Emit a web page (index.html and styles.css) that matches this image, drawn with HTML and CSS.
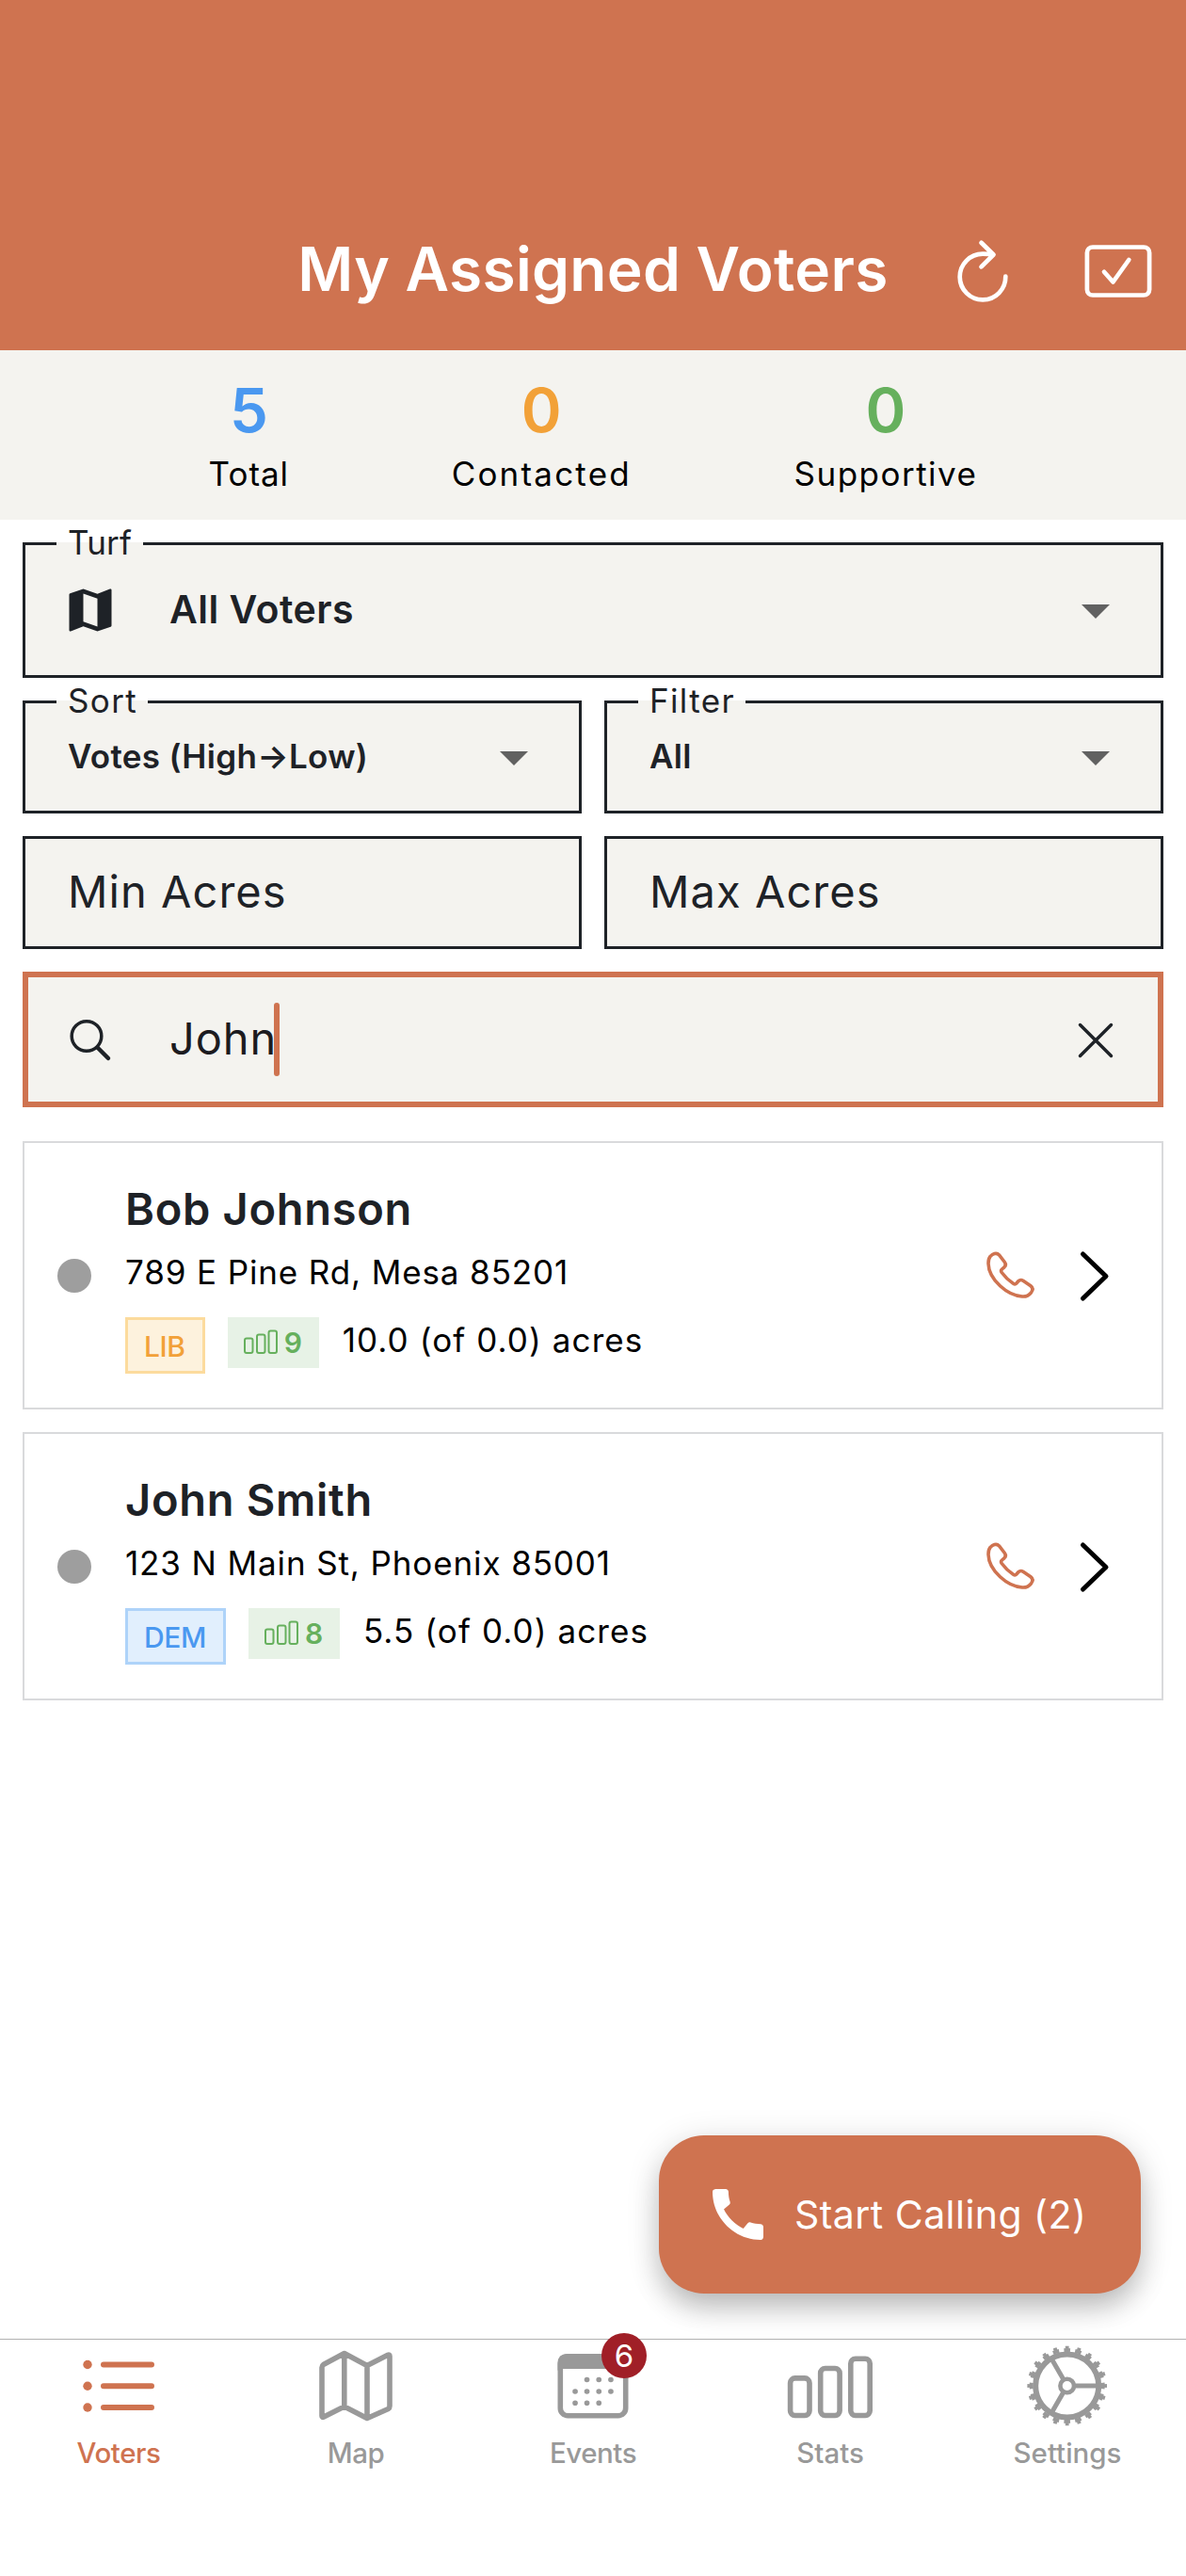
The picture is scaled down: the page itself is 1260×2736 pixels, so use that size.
FILE: index.html
```
<!DOCTYPE html>
<html lang="en">
<head>
<meta charset="utf-8">
<title>My Assigned Voters</title>
<link rel="stylesheet" href="styles.css">
</head>
<body>
<div class="app">
  <header class="header">
    <div class="bar">
      <h1 class="title">My Assigned Voters</h1>
      <div class="actions">
        <svg class="action" viewBox="0 0 72 72"><path d="M47.500 20.500C44 19.600 40 19.600 36 19.600A24.300 24.400 0 1 0 60.300 43.600M34.500 7.800L47.500 20.500L34.500 33.300" /></svg>
        <svg class="action" viewBox="0 0 72 72"><rect x="2.900" y="12.500" width="66.200" height="51" rx="6"/><path d="M21 38.700L30.500 49.500L47.300 26"/></svg>
      </div>
    </div>
  </header>

  <section class="stats">
    <div class="stat"><span class="num blue">5</span><span class="cap cap-total">Total</span></div>
    <div class="stat"><span class="num orange">0</span><span class="cap cap-contacted">Contacted</span></div>
    <div class="stat"><span class="num green">0</span><span class="cap cap-supportive">Supportive</span></div>
  </section>

  <main class="main">
    <form class="filters">
      <div class="field tall">
        <span class="label label-turf">Turf</span>
        <svg class="icon" viewBox="0 0 24 24"><path d="M20.500 3l-.16.03L15 5.100 9 3 3.360 4.900c-.21.070-.36.250-.36.480V20.500c0 .280.220.500.500.500l.16-.03L9 18.900l6 2.100 5.640-1.900c.21-.07.360-.25.360-.48V3.500c0-.28-.22-.5-.5-.5zM15 19l-6-2.110V5l6 2.110V19z"/></svg>
        <span class="value value-lg">All Voters</span>
        <svg class="arrow" viewBox="0 0 60 60"><path d="M15 24h30L30 39z"/></svg>
      </div>
      <div class="row">
        <div class="field">
          <span class="label">Sort</span>
          <span class="value">Votes (High→Low)</span>
          <svg class="arrow" viewBox="0 0 60 60"><path d="M15 24h30L30 39z"/></svg>
        </div>
        <div class="field">
          <span class="label">Filter</span>
          <span class="value">All</span>
          <svg class="arrow" viewBox="0 0 60 60"><path d="M15 24h30L30 39z"/></svg>
        </div>
      </div>
      <div class="row">
        <div class="field"><span class="placeholder">Min Acres</span></div>
        <div class="field"><span class="placeholder">Max Acres</span></div>
      </div>
      <div class="field tall focused">
        <svg class="icon line" viewBox="0 0 60 60"><circle cx="26" cy="26.500" r="15.800"/><path d="M37.500 38.500L49 50" stroke-width="4.500"/></svg>
        <span class="query">John</span><span class="caret"></span>
        <svg class="arrow line" viewBox="0 0 60 60"><path d="M13.500 14.500L46.500 47.500M46.500 14.500L13.500 47.500"/></svg>
      </div>
    </form>

    <section class="list">
      <article class="card">
        <span class="dot"></span>
        <div class="body">
          <h2 class="name">Bob Johnson</h2>
          <p class="address">789 E Pine Rd, Mesa 85201</p>
          <div class="meta">
            <span class="party lib">LIB</span>
            <span class="score"><svg class="bars" viewBox="0 0 38 38"><rect x="1" y="14.500" width="8.500" height="15.500" rx="2"/><rect x="14" y="10.500" width="8.500" height="19.500" rx="2"/><rect x="26.500" y="6.500" width="8.500" height="23.500" rx="2"/></svg>9</span>
            <span class="acres">10.0 (of 0.0) acres</span>
          </div>
        </div>
        <svg class="call" viewBox="0 0 60 60"><path d="M9 9.500C11.500 7 15.500 4.700 18.500 8L24.300 15.500C25.800 17.600 25.600 19.300 24 20.800L21.500 23C20.200 24.200 20.300 25.200 21.200 26.500C24.500 31 28.800 35.200 33.500 38.300C34.800 39.100 35.800 39.200 36.900 38L39 35.600C40.500 34.200 42.200 34.200 44 35.200L52 40.800C54.500 42.700 54.200 45.500 52.500 47.800C50 51 46.500 52.300 43 52C35 51.500 26.500 47.300 19.500 40.800C12 33.800 7.200 25.500 7 17C7 14 7.500 11.300 9 9.500Z"/></svg>
        <svg class="chevron" viewBox="0 0 36 60"><path d="M5.500 7L30 30.500L5.500 54"/></svg>
      </article>
      <article class="card">
        <span class="dot"></span>
        <div class="body">
          <h2 class="name">John Smith</h2>
          <p class="address">123 N Main St, Phoenix 85001</p>
          <div class="meta">
            <span class="party dem">DEM</span>
            <span class="score"><svg class="bars" viewBox="0 0 38 38"><rect x="1" y="14.500" width="8.500" height="15.500" rx="2"/><rect x="14" y="10.500" width="8.500" height="19.500" rx="2"/><rect x="26.500" y="6.500" width="8.500" height="23.500" rx="2"/></svg>8</span>
            <span class="acres">5.5 (of 0.0) acres</span>
          </div>
        </div>
        <svg class="call" viewBox="0 0 60 60"><path d="M9 9.500C11.500 7 15.500 4.700 18.500 8L24.300 15.500C25.800 17.600 25.600 19.300 24 20.800L21.500 23C20.200 24.200 20.300 25.200 21.200 26.500C24.500 31 28.800 35.200 33.500 38.300C34.800 39.100 35.800 39.200 36.900 38L39 35.600C40.500 34.200 42.200 34.200 44 35.200L52 40.800C54.500 42.700 54.200 45.500 52.500 47.800C50 51 46.500 52.300 43 52C35 51.500 26.500 47.300 19.500 40.800C12 33.800 7.200 25.500 7 17C7 14 7.500 11.300 9 9.500Z"/></svg>
        <svg class="chevron" viewBox="0 0 36 60"><path d="M5.500 7L30 30.500L5.500 54"/></svg>
      </article>
    </section>

    <button class="fab" type="button">
      <svg viewBox="0 0 24 24"><path d="M20.010 15.380c-1.230 0-2.420-.2-3.530-.56-.35-.12-.74-.03-1.010.240l-1.570 1.970c-2.830-1.350-5.480-3.900-6.890-6.830l1.950-1.660c.27-.28.350-.67.240-1.020-.37-1.110-.56-2.300-.56-3.530 0-.54-.45-.99-.99-.99H4.190C3.650 3 3 3.240 3 3.990 3 13.280 10.730 21 20.010 21c.71 0 .990-.63.990-1.180v-3.450c0-.54-.45-.99-.99-.99z"/></svg>
      <span>Start Calling (2)</span>
    </button>
  </main>

  <nav class="tabs">
    <a class="tab active">
      <svg viewBox="0 0 100 98"><g fill="currentColor" stroke="none"><circle cx="17" cy="26.500" r="4.700"/><circle cx="17" cy="49.300" r="4.700"/><circle cx="17" cy="72" r="4.700"/></g><path d="M34 26.500H85M34 49.300H85M34 72H85" stroke-width="6"/></svg>
      <span class="tab-label tight">Voters</span>
    </a>
    <a class="tab">
      <svg viewBox="0 0 100 98"><path d="M14 29.500Q14 27.500 15.500 26.500L37.800 14.500L62 27.500L84 16.300Q86 15.500 86 17.500V70.500Q86 72.500 84.500 73.500L62 83.500L37.800 71L16 82Q14 83 14 81ZM37.800 14.500V71M62 27.500V83"/></svg>
      <span class="tab-label tight">Map</span>
    </a>
    <a class="tab">
      <svg viewBox="0 0 100 98"><rect x="15.300" y="17.800" width="69.400" height="62.900" rx="8"/><path d="M12.500 33V25Q12.500 15 22.500 15H77.500Q87.500 15 87.500 25V33Q87 31 83 31H17Q13 31 12.500 33Z" fill="currentColor" stroke="none"/><path d="M43.500 42.500h.1M56.200 42.500h.1M68.900 42.500h.1M31 55h.1M43.500 55h.1M56.200 55h.1M68.900 55h.1M31 67.300h.1M43.500 67.300h.1M56.200 67.300h.1" stroke-width="5.600"/></svg>
      <span class="badge">6</span>
      <span class="tab-label tight">Events</span>
    </a>
    <a class="tab">
      <svg viewBox="0 0 100 98"><rect x="7.600" y="40.900" width="20.400" height="39.600" rx="5"/><rect x="39.700" y="30.500" width="20.400" height="50" rx="5"/><rect x="71.800" y="20.200" width="20.400" height="60.300" rx="5"/></svg>
      <span class="tab-label">Stats</span>
    </a>
    <a class="tab">
      <svg viewBox="0 0 100 98"><g transform="translate(49.700 49)"><circle r="33.500" stroke-width="6"/><circle r="38" stroke-width="4" pathLength="200" stroke-dasharray="5.600 4.400" stroke-dashoffset="2.800" stroke-linecap="butt"/><circle r="40.800" stroke-width="3" pathLength="200" stroke-dasharray="3 7" stroke-dashoffset="1.500" stroke-linecap="butt"/><circle r="7.300" stroke-width="4.600"/><path d="M8 0H32M-4 -6.900L-16 -27.700M-4 6.900L-16 27.700" stroke-width="5"/></g></svg>
      <span class="tab-label">Settings</span>
    </a>
  </nav>
</div>
</body>
</html>
```
FILE: styles.css
```
* { box-sizing: border-box; margin: 0; padding: 0; }
body { font-family: "Inter", sans-serif; font-kerning: normal; color: #1e2227; background: #fff; }
svg { display: block; flex: none; fill: none; }

.app { width: 1260px; height: 2736px; display: flex; flex-direction: column; overflow: hidden; }

.header { height: 372px; padding-top: 200px; background: #cf7350; flex: none; }
.bar { height: 172px; display: grid; grid-template-columns: 1fr auto 1fr; align-items: center; }
.title { grid-column: 2; font-size: 64px; font-weight: 600; letter-spacing: .31px; line-height: 80px; color: #fff; white-space: nowrap; }
.actions { display: flex; justify-content: flex-end; gap: 72px; padding-right: 36px; }
.action { width: 72px; height: 72px; stroke: #fff; stroke-width: 4.700; stroke-linecap: round; stroke-linejoin: round; }

.stats { height: 180px; padding: 22px 49px 0; display: flex; justify-content: space-evenly; background: #f4f3ef; flex: none; }
.stat { display: flex; flex-direction: column; align-items: center; }
.num { font-size: 65px; font-weight: 600; line-height: 84px; }
.blue { color: #4a98f0; }
.orange { color: #f2a138; }
.green { color: #66b05d; }
.cap { font-size: 35px; line-height: 50px; color: #000; }
.cap-total { letter-spacing: .97px; }
.cap-contacted { letter-spacing: 2.200px; }
.cap-supportive { letter-spacing: 1.480px; }

.main { flex: 1; position: relative; padding: 24px; }
.filters { display: flex; flex-direction: column; gap: 24px; }
.row { display: grid; grid-template-columns: 1fr 1fr; gap: 24px; }
.field { position: relative; height: 120px; padding: 0 39px; display: flex; align-items: center; border: 3px solid #1e2227; background: #f4f3ef; }
.field.tall { height: 144px; }
.field.focused { border: 6px solid #cf7350; padding: 0 36px; }
.label { position: absolute; left: 33px; top: -23px; padding: 0 11px 0 12px; font-size: 35px; line-height: 40px; letter-spacing: 1.350px; background: linear-gradient(#fff 20px, #f4f3ef 20px); }
.label-turf { letter-spacing: .2px; padding-right: 12px; }
.value { font-size: 35px; font-weight: 600; letter-spacing: .33px; margin: 0 0 2px 6px; }
.value-lg { font-size: 41px; letter-spacing: .48px; margin-left: 54px; }
.placeholder { font-size: 47px; letter-spacing: 1.050px; margin: 0 0 4px 6px; }
.query { font-size: 47px; letter-spacing: .9px; margin: 0 0 4px 54px; color: #1c1b1f; }
.caret { width: 6px; height: 78px; border-radius: 3px; background: #cf7350; margin-left: -3px; }
.icon { width: 60px; height: 60px; fill: #1e2227; }
.arrow { width: 60px; height: 60px; fill: #616161; margin-left: auto; }
.line { fill: none; stroke: #1e2227; stroke-width: 3.500; stroke-linecap: round; }

.list { display: flex; flex-direction: column; gap: 24px; margin-top: 36px; }
.card { height: 285px; padding: 0 53px 0 35px; display: flex; align-items: center; border: 2px solid #d9dadc; background: #fff; }
.dot { width: 36px; height: 36px; border-radius: 50%; background: #9e9e9e; margin-right: 36px; flex: none; }
.body { flex: 1; align-self: stretch; padding-top: 40px; }
.name { font-size: 47px; line-height: 60px; font-weight: 600; letter-spacing: .7px; }
.address { font-size: 35px; line-height: 50px; letter-spacing: .88px; margin-top: 12px; color: #000; }
.meta { display: flex; align-items: flex-start; margin-top: 23px; }
.party { height: 60px; padding: 0 18px 0 17px; border: 3px solid; font-size: 30px; font-weight: 500; line-height: 57px; letter-spacing: -.4px; }
.lib { color: #f2a138; border-color: #fcdb9d; background: #fdf2dd; }
.dem { color: #4a98f0; border-color: #aed3f9; background: #e1effd; }
.score { height: 54px; width: 97px; margin-left: 24px; padding-left: 17px; display: flex; align-items: center; gap: 5px; font-size: 30px; font-weight: 600; line-height: 58px; color: #66b05d; background: #e7f2e6; }
.bars { width: 38px; height: 38px; stroke: currentColor; stroke-width: 2; }
.acres { margin-left: 25px; font-size: 35px; line-height: 48px; letter-spacing: 1.100px; color: #000; }
.call { width: 60px; height: 60px; stroke: #cf7350; stroke-width: 3.600; }
.chevron { width: 36px; height: 60px; margin-left: 42px; stroke: #000; stroke-width: 5; stroke-linecap: round; stroke-linejoin: round; }

.fab { position: absolute; right: 48px; bottom: 48px; width: 512px; height: 168px; padding-left: 48px; display: flex; align-items: center; gap: 24px; border: 0; border-radius: 48px; background: #cf7350; color: #fff; font: 400 41px "Inter", sans-serif; letter-spacing: .46px; white-space: nowrap; box-shadow: 0 18px 30px -3px rgba(0,0,0,.2), 0 6px 36px rgba(0,0,0,.14); }
.fab svg { width: 72px; height: 72px; fill: #fff; }

.tabs { height: 252px; display: grid; grid-template-columns: repeat(5, 1fr); border-top: 1px solid #b2b2b2; background: #fff; flex: none; }
.tab { position: relative; display: flex; flex-direction: column; align-items: center; color: #999; }
.tab.active { color: #cf7350; }
.tab svg { width: 100px; height: 98px; stroke: currentColor; stroke-width: 5.600; stroke-linecap: round; stroke-linejoin: round; }
.tab-label { font-size: 29.500px; font-weight: 500; line-height: 45px; }
.tight { letter-spacing: -.45px; }
.badge { position: absolute; left: 135px; top: -7px; width: 48px; height: 48px; border-radius: 50%; background: #a01f27; color: #fff; font-size: 33px; line-height: 48px; text-align: center; }
```
